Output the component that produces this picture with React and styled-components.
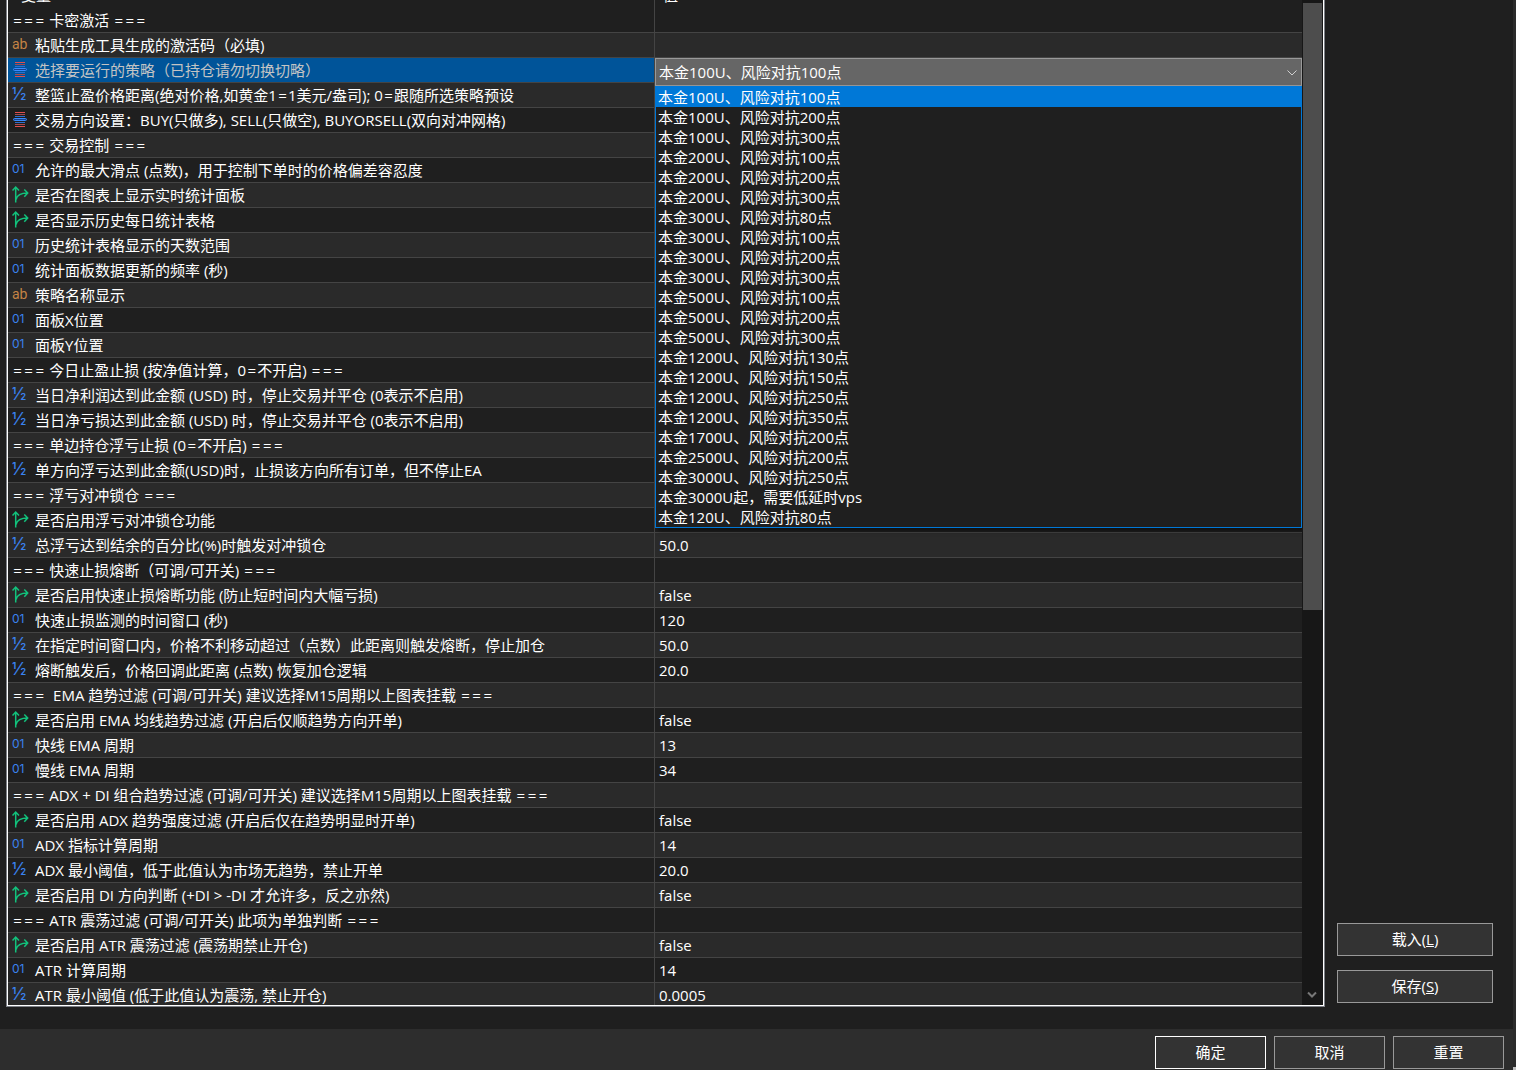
import { createGlobalStyle, styled } from 'styled-components'

// type: title | text | enum | double | int | bool
const rows = [
    { type: 'title', name: '=== 卡密激活 ===' },
    { type: 'text', name: '粘贴生成工具生成的激活码（必填)' },
    { type: 'enum', name: '选择要运行的策略（已持仓请勿切换切略）', selected: true },
    { type: 'double', name: '整篮止盈价格距离(绝对价格,如黄金1=1美元/盎司); 0=跟随所选策略预设' },
    { type: 'enum', name: '交易方向设置：BUY(只做多), SELL(只做空), BUYORSELL(双向对冲网格)' },
    { type: 'title', name: '=== 交易控制 ===' },
    { type: 'int', name: '允许的最大滑点 (点数)，用于控制下单时的价格偏差容忍度' },
    { type: 'bool', name: '是否在图表上显示实时统计面板' },
    { type: 'bool', name: '是否显示历史每日统计表格' },
    { type: 'int', name: '历史统计表格显示的天数范围' },
    { type: 'int', name: '统计面板数据更新的频率 (秒)' },
    { type: 'text', name: '策略名称显示' },
    { type: 'int', name: '面板X位置' },
    { type: 'int', name: '面板Y位置' },
    { type: 'title', name: '=== 今日止盈止损 (按净值计算，0=不开启) ===' },
    { type: 'double', name: '当日净利润达到此金额 (USD) 时，停止交易并平仓 (0表示不启用)' },
    { type: 'double', name: '当日净亏损达到此金额 (USD) 时，停止交易并平仓 (0表示不启用)' },
    { type: 'title', name: '=== 单边持仓浮亏止损 (0=不开启) ===' },
    { type: 'double', name: '单方向浮亏达到此金额(USD)时，止损该方向所有订单，但不停止EA' },
    { type: 'title', name: '=== 浮亏对冲锁仓 ===' },
    { type: 'bool', name: '是否启用浮亏对冲锁仓功能' },
    { type: 'double', name: '总浮亏达到结余的百分比(%)时触发对冲锁仓', value: '50.0' },
    { type: 'title', name: '=== 快速止损熔断（可调/可开关) ===' },
    { type: 'bool', name: '是否启用快速止损熔断功能 (防止短时间内大幅亏损)', value: 'false' },
    { type: 'int', name: '快速止损监测的时间窗口 (秒)', value: '120' },
    { type: 'double', name: '在指定时间窗口内，价格不利移动超过（点数）此距离则触发熔断，停止加仓', value: '50.0' },
    { type: 'double', name: '熔断触发后，价格回调此距离 (点数) 恢复加仓逻辑', value: '20.0' },
    { type: 'title', name: '===  EMA 趋势过滤 (可调/可开关) 建议选择M15周期以上图表挂载 ===' },
    { type: 'bool', name: '是否启用 EMA 均线趋势过滤 (开启后仅顺趋势方向开单)', value: 'false' },
    { type: 'int', name: '快线 EMA 周期', value: '13' },
    { type: 'int', name: '慢线 EMA 周期', value: '34' },
    { type: 'title', name: '=== ADX + DI 组合趋势过滤 (可调/可开关) 建议选择M15周期以上图表挂载 ===' },
    { type: 'bool', name: '是否启用 ADX 趋势强度过滤 (开启后仅在趋势明显时开单)', value: 'false' },
    { type: 'int', name: 'ADX 指标计算周期', value: '14' },
    { type: 'double', name: 'ADX 最小阈值，低于此值认为市场无趋势，禁止开单', value: '20.0' },
    { type: 'bool', name: '是否启用 DI 方向判断 (+DI > -DI 才允许多，反之亦然)', value: 'false' },
    { type: 'title', name: '=== ATR 震荡过滤 (可调/可开关) 此项为单独判断 ===' },
    { type: 'bool', name: '是否启用 ATR 震荡过滤 (震荡期禁止开仓)', value: 'false' },
    { type: 'int', name: 'ATR 计算周期', value: '14' },
    { type: 'double', name: 'ATR 最小阈值 (低于此值认为震荡, 禁止开仓)', value: '0.0005' },
]

const strategies = [
    '本金100U、风险对抗100点',
    '本金100U、风险对抗200点',
    '本金100U、风险对抗300点',
    '本金200U、风险对抗100点',
    '本金200U、风险对抗200点',
    '本金200U、风险对抗300点',
    '本金300U、风险对抗80点',
    '本金300U、风险对抗100点',
    '本金300U、风险对抗200点',
    '本金300U、风险对抗300点',
    '本金500U、风险对抗100点',
    '本金500U、风险对抗200点',
    '本金500U、风险对抗300点',
    '本金1200U、风险对抗130点',
    '本金1200U、风险对抗150点',
    '本金1200U、风险对抗250点',
    '本金1200U、风险对抗350点',
    '本金1700U、风险对抗200点',
    '本金2500U、风险对抗200点',
    '本金3000U、风险对抗250点',
    '本金3000U起，需要低延时vps',
    '本金120U、风险对抗80点',
]

const TypeIcon = ({ type }) => {
    if (type === 'text') return <TypeMark $color="#c48345" $size={14}>ab</TypeMark>
    if (type === 'int') return <TypeMark $color="#3a82f0" $size={12} $font="Inter">01</TypeMark>
    if (type === 'double') return <TypeMark $color="#3a82f0" $size={17} $font="Inter">½</TypeMark>
    if (type === 'enum') {
        return (
            <IconSvg viewBox="0 0 17 20">
                <path d="M3 3.500h10M3 17.500h10" stroke="#e04f50" />
                <path d="M3 5.500h10M3 15.500h10" stroke="#a84a52" />
                <path d="M3 7.500h10M3 13.500h10" stroke="#2f6fd0" />
                <rect x="1.500" y="9.500" width="13" height="2" rx="1" fill="#17408c" stroke="#3a8cff" />
            </IconSvg>
        )
    }
    return (
        <IconSvg viewBox="0 0 17 20">
            <path
                d="M3.700 18.500V3M.5 6.500 3.700 3 7 6.500M4 15.500C5 11 8 9 15.700 9M12.300 5.500 15.700 9l-3.400 3.700"
                stroke="#12c27c"
                strokeWidth="1.5"
            />
        </IconSvg>
    )
}

// equals signs are drawn wider than the text face has them
const Label = ({ text }) =>
    text.split(/(=+)/).map((part, index) =>
        part.startsWith('=') ? <Equals key={index}>{part}</Equals> : part
    )

const StrategySelect = () => (
    <Combo>
        <Select aria-labelledby="strategy-name" defaultValue={strategies[0]}>
            {strategies.map((name) => <option key={name}>{name}</option>)}
        </Select>
        <ComboArrow viewBox="0 0 10 6">
            <path d="M.5.5 5 5 9.500.5" />
        </ComboArrow>
        <OptionList role="listbox" aria-labelledby="strategy-name">
            {strategies.map((name, index) => (
                <Option key={name} role="option" aria-selected={index === 0}>{name}</Option>
            ))}
        </OptionList>
    </Combo>
)

const App = () => {
    return (
        <Dialog>
            <GlobalStyle />
            <Main>
                <Panel>
                    <TableView>
                        <Table>
                            <thead>
                                <tr>
                                    <HeadCell>变量</HeadCell>
                                    <HeadCell $value>值</HeadCell>
                                </tr>
                            </thead>
                            <tbody>
                                {rows.map((row) => (
                                    <Row key={row.name}>
                                        <NameCell $selected={row.selected}>
                                            <NameLayout>
                                                {row.type !== 'title' && <IconSlot><TypeIcon type={row.type} /></IconSlot>}
                                                <span id={row.selected ? 'strategy-name' : undefined}>
                                                    <Label text={row.name} />
                                                </span>
                                            </NameLayout>
                                        </NameCell>
                                        <ValueCell>
                                            {row.selected ? <StrategySelect /> : row.value}
                                        </ValueCell>
                                    </Row>
                                ))}
                            </tbody>
                        </Table>
                    </TableView>
                    <Scrollbar>
                        <Thumb />
                        <ScrollArrow viewBox="0 0 10 8">
                            <path d="M1 1.500 5 5.500l4-4" />
                        </ScrollArrow>
                    </Scrollbar>
                </Panel>
                <Side>
                    <Button>载入(<u>L</u>)</Button>
                    <Button>保存(<u>S</u>)</Button>
                </Side>
            </Main>
            <Footer>
                <FooterButton $primary>确定</FooterButton>
                <FooterButton>取消</FooterButton>
                <FooterButton>重置</FooterButton>
            </Footer>
            <Grip />
        </Dialog>
    )
}

// Components

const GlobalStyle = createGlobalStyle`
    * {
      box-sizing: border-box;
    }

    body {
      margin: 0;
      background-color: #1f1f1f;
      color: #ffffff;
      font-family: "Open Sans", "Noto Sans CJK SC", sans-serif;
      font-size: 15px;
      line-height: 20px;
    }

    button, select {
      font: inherit;
      color: inherit;
    }
`

const Table = styled.table`
      width: 100%;
      margin-top: -17px;
      table-layout: fixed;
      border-collapse: separate;
      border-spacing: 0;
      white-space: pre;
    `

const HeadCell = styled.th`
      height: 25px;
      padding: 0 ${({ $value }) => $value ? '8px' : '13px'} 2px;
      border-right: ${({ $value }) => $value ? 'none' : '1px solid #444444'};
      font-weight: normal;
      text-align: left;
    `

const Row = styled.tr`
      background-color: #1f1f1f;

      &:nth-child(even) {
        background-color: #2a2a2a;
      }
    `

const Cell = styled.td`
      height: 25px;
      border-bottom: 1px solid #444444;
    `

const NameCell = styled(Cell)`
      padding: 0 0 0 4px;
      border-right: 1px solid #444444;
      background-color: ${({ $selected }) => $selected ? '#005499' : 'transparent'};
      color: ${({ $selected }) => $selected ? '#c4c4c4' : 'inherit'};
    `

const ValueCell = styled(Cell)`
      position: relative;
      padding: 0 4px;
    `

const Equals = styled.span`
      font-family: Inter, sans-serif;
      font-size: 17px;
      font-weight: 300;
    `

const TypeMark = styled.span`
      color: ${({ $color }) => $color};
      font-family: ${({ $font }) => $font || 'Roboto'}, sans-serif;
      font-size: ${({ $size }) => $size}px;
    `

const IconSvg = styled.svg`
      width: 17px;
      height: 20px;
      fill: none;
    `

const Select = styled.select`
      display: block;
      width: 100%;
      height: 28px;
      padding: 0 3px;
      border: 1px solid #999999;
      border-radius: 0;
      background-color: #666666;
      appearance: none;
      outline: none;
    `

const ComboArrow = styled.svg`
      position: absolute;
      top: 12px;
      right: 5px;
      width: 10px;
      height: 6px;
      fill: none;
      stroke: #d0d0d0;
    `

const OptionList = styled.ul`
      margin: 0;
      padding: 0;
      border: 1px solid #0078d7;
      background-color: #1f1f1f;
      box-shadow: 3px 3px 4px rgba(0, 0, 0, .5);
      list-style: none;
    `

const Option = styled.li`
      height: 20px;
      padding: 0 2px;

      &[aria-selected='true'] {
        background-color: #0078d7;
      }
    `

const Thumb = styled.div`
      height: 60.4%;
      margin: 3px 1px 0;
      background-color: #4d4d4d;
    `

const ScrollArrow = styled.svg`
      width: 10px;
      height: 8px;
      margin: auto 6px 6px 5px;
      fill: none;
      stroke: #777777;
      stroke-width: 2;
    `

const Button = styled.button`
      height: 33px;
      padding: 0 0 2px;
      border: 1px solid ${({ $primary }) => $primary ? '#ffffff' : '#999999'};
      background-color: #333333;
    `

const FooterButton = styled(Button)`
      width: 111px;
    `

const Grip = styled.div`
      position: absolute;
      right: -3px;
      bottom: 0;
      width: 3px;
      height: 3px;
      background-color: #bfbfbf;
    `

// Layouts

const Dialog = styled.div`
      position: relative;
      display: flex;
      flex-direction: column;
      height: 100vh;
      border-right: 3px solid #2b2b2b;
    `

const Main = styled.div`
      flex: 1;
      min-height: 0;
      display: flex;
      gap: 12px;
      padding: 0 20px 22px 6px;
    `

const Panel = styled.div`
      flex: 1;
      min-width: 0;
      display: flex;
      border: solid #7d8087;
      border-width: 0 1px 1px;
      overflow: hidden;
    `

const TableView = styled.div`
      flex: 1;
      min-width: 0;
      border: solid #ffffff;
      border-width: 0 0 1px 1px;
      overflow: hidden;
    `

const Scrollbar = styled.div`
      display: flex;
      flex-direction: column;
      width: 22px;
      border: solid #ffffff;
      border-width: 0 1px 1px 0;
      background-color: #171717;
    `

const NameLayout = styled.div`
      display: flex;
      align-items: center;
      height: 24px;
    `

const IconSlot = styled.span`
      display: flex;
      align-items: center;
      width: 23px;
      height: 20px;
      margin-bottom: 2px;
    `

const Combo = styled.div`
      position: absolute;
      z-index: 1;
      top: 0;
      left: 0;
      right: 0;
    `

const Side = styled.div`
      display: flex;
      flex-direction: column;
      justify-content: flex-end;
      gap: 14px;
      width: 156px;
      padding-bottom: 4px;
    `

const Footer = styled.div`
      display: flex;
      justify-content: flex-end;
      gap: 8px;
      height: 41px;
      padding: 7px 9px 0;
      background-color: #2d2d2d;
    `

export default App;
